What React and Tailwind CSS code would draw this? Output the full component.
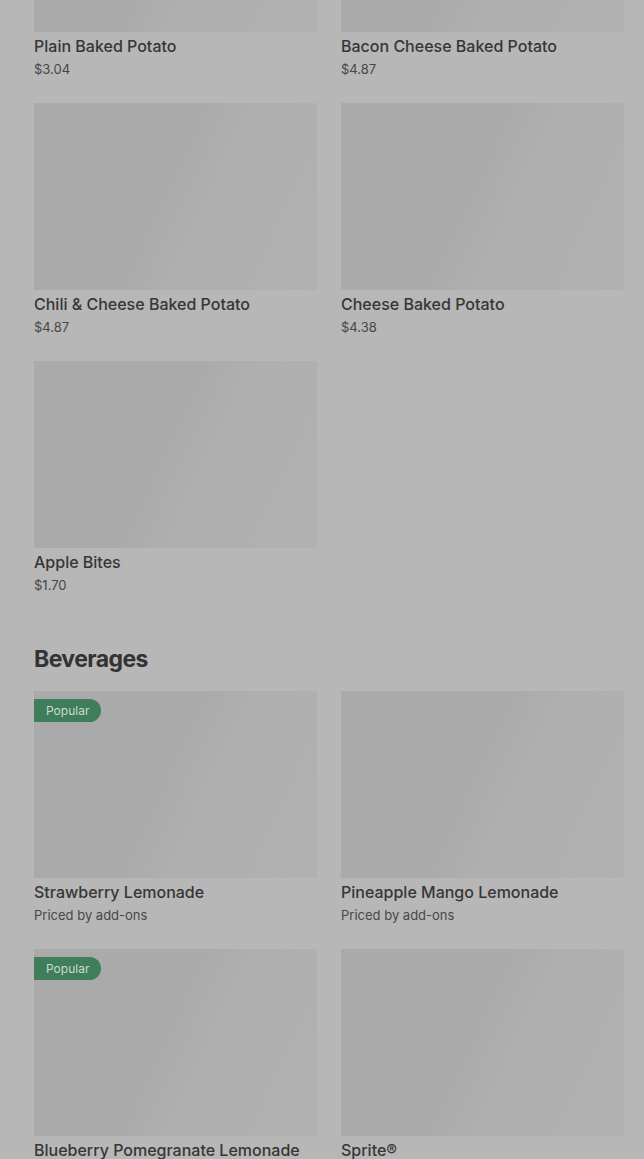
const potatoes = [
  { name: 'Plain Baked Potato', price: '$3.04' },
  { name: 'Bacon Cheese Baked Potato', price: '$4.87' },
  { name: 'Chili & Cheese Baked Potato', price: '$4.87' },
  { name: 'Cheese Baked Potato', price: '$4.38' },
  { name: 'Apple Bites', price: '$1.70' },
]

const beverages = [
  { name: 'Strawberry Lemonade', price: 'Priced by add-ons', popular: true },
  { name: 'Pineapple Mango Lemonade', price: 'Priced by add-ons' },
  { name: 'Blueberry Pomegranate Lemonade', price: 'Priced by add-ons', popular: true },
  { name: 'Sprite®', price: '$2.19' },
]

function Item({ item }) {
  return (
    <div className="flex flex-col">
      <div className="relative h-[187px] bg-[linear-gradient(115deg,#aaaaaa_0%,#aaaaaa_45%,#afafaf_60%,#b1b1b1_100%)]">
        {item.popular && (
          <span className="absolute left-0 top-2 rounded-r-full bg-[#3f7d5b] pl-3 pr-3 py-[3px] text-xs leading-[17px] text-[#c9dcd1]">
            Popular
          </span>
        )}
      </div>
      <div className="mt-[2px] text-base font-medium leading-6 text-[#363636]">{item.name}</div>
      <div className="mt-px text-[13px] leading-5 text-[#474747]">{item.price}</div>
    </div>
  )
}

export default function App() {
  return (
    <div
      className="h-[1159px] overflow-hidden bg-[#b7b7b7] pl-[34px] pr-[20px]"
      style={{ fontFamily: 'Inter, "Noto Sans", sans-serif' }}
    >
      <div className="-mt-[155px] grid grid-cols-2 gap-x-6 gap-y-6">
        {potatoes.map((p) => (
          <Item key={p.name} item={p} />
        ))}
      </div>

      <h2 className="mt-12 text-[23px] font-bold leading-8 tracking-tight text-[#333333]">Beverages</h2>

      <div className="mt-4 grid grid-cols-2 gap-x-6 gap-y-6">
        {beverages.map((b) => (
          <Item key={b.name} item={b} />
        ))}
      </div>
    </div>
  )
}
